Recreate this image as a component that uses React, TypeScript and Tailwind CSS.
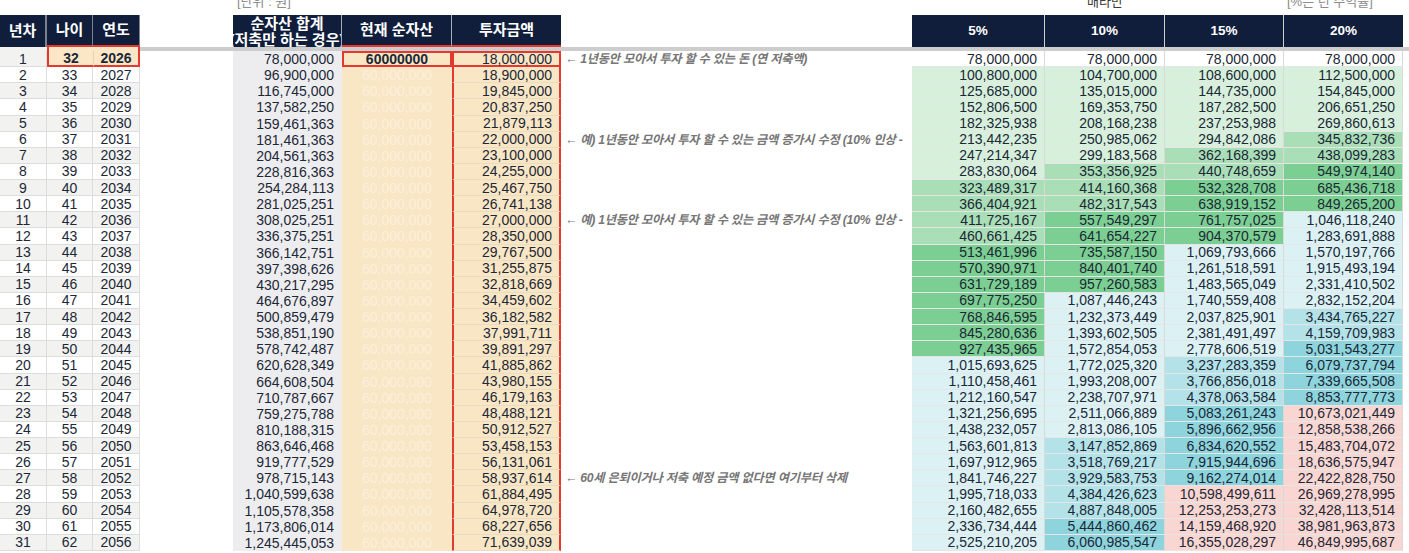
import React from "react";

type Row = [string, string, string, string, string, string, string, string, string];

const DATA: Row[] = [
  ["1", "32", "2026", "78,000,000", "18,000,000", "78,000,000", "78,000,000", "78,000,000", "78,000,000"],
  ["2", "33", "2027", "96,900,000", "18,900,000", "100,800,000", "104,700,000", "108,600,000", "112,500,000"],
  ["3", "34", "2028", "116,745,000", "19,845,000", "125,685,000", "135,015,000", "144,735,000", "154,845,000"],
  ["4", "35", "2029", "137,582,250", "20,837,250", "152,806,500", "169,353,750", "187,282,500", "206,651,250"],
  ["5", "36", "2030", "159,461,363", "21,879,113", "182,325,938", "208,168,238", "237,253,988", "269,860,613"],
  ["6", "37", "2031", "181,461,363", "22,000,000", "213,442,235", "250,985,062", "294,842,086", "345,832,736"],
  ["7", "38", "2032", "204,561,363", "23,100,000", "247,214,347", "299,183,568", "362,168,399", "438,099,283"],
  ["8", "39", "2033", "228,816,363", "24,255,000", "283,830,064", "353,356,925", "440,748,659", "549,974,140"],
  ["9", "40", "2034", "254,284,113", "25,467,750", "323,489,317", "414,160,368", "532,328,708", "685,436,718"],
  ["10", "41", "2035", "281,025,251", "26,741,138", "366,404,921", "482,317,543", "638,919,152", "849,265,200"],
  ["11", "42", "2036", "308,025,251", "27,000,000", "411,725,167", "557,549,297", "761,757,025", "1,046,118,240"],
  ["12", "43", "2037", "336,375,251", "28,350,000", "460,661,425", "641,654,227", "904,370,579", "1,283,691,888"],
  ["13", "44", "2038", "366,142,751", "29,767,500", "513,461,996", "735,587,150", "1,069,793,666", "1,570,197,766"],
  ["14", "45", "2039", "397,398,626", "31,255,875", "570,390,971", "840,401,740", "1,261,518,591", "1,915,493,194"],
  ["15", "46", "2040", "430,217,295", "32,818,669", "631,729,189", "957,260,583", "1,483,565,049", "2,331,410,502"],
  ["16", "47", "2041", "464,676,897", "34,459,602", "697,775,250", "1,087,446,243", "1,740,559,408", "2,832,152,204"],
  ["17", "48", "2042", "500,859,479", "36,182,582", "768,846,595", "1,232,373,449", "2,037,825,901", "3,434,765,227"],
  ["18", "49", "2043", "538,851,190", "37,991,711", "845,280,636", "1,393,602,505", "2,381,491,497", "4,159,709,983"],
  ["19", "50", "2044", "578,742,487", "39,891,297", "927,435,965", "1,572,854,053", "2,778,606,519", "5,031,543,277"],
  ["20", "51", "2045", "620,628,349", "41,885,862", "1,015,693,625", "1,772,025,320", "3,237,283,359", "6,079,737,794"],
  ["21", "52", "2046", "664,608,504", "43,980,155", "1,110,458,461", "1,993,208,007", "3,766,856,018", "7,339,665,508"],
  ["22", "53", "2047", "710,787,667", "46,179,163", "1,212,160,547", "2,238,707,971", "4,378,063,584", "8,853,777,773"],
  ["23", "54", "2048", "759,275,788", "48,488,121", "1,321,256,695", "2,511,066,889", "5,083,261,243", "10,673,021,449"],
  ["24", "55", "2049", "810,188,315", "50,912,527", "1,438,232,057", "2,813,086,105", "5,896,662,956", "12,858,538,266"],
  ["25", "56", "2050", "863,646,468", "53,458,153", "1,563,601,813", "3,147,852,869", "6,834,620,552", "15,483,704,072"],
  ["26", "57", "2051", "919,777,529", "56,131,061", "1,697,912,965", "3,518,769,217", "7,915,944,696", "18,636,575,947"],
  ["27", "58", "2052", "978,715,143", "58,937,614", "1,841,746,227", "3,929,583,753", "9,162,274,014", "22,422,828,750"],
  ["28", "59", "2053", "1,040,599,638", "61,884,495", "1,995,718,033", "4,384,426,623", "10,598,499,611", "26,969,278,995"],
  ["29", "60", "2054", "1,105,578,358", "64,978,720", "2,160,482,655", "4,887,848,005", "12,253,253,273", "32,428,113,514"],
  ["30", "61", "2055", "1,173,806,014", "68,227,656", "2,336,734,444", "5,444,860,462", "14,159,468,920", "38,981,963,873"],
  ["31", "62", "2056", "1,245,445,053", "71,639,039", "2,525,210,205", "6,060,985,547", "16,355,028,297", "46,849,995,687"],
];

const RAISE = "← 예) 1년동안 모아서 투자 할 수 있는 금액 증가시 수정 (10% 인상 -";
const NOTES: Record<number, string> = {
  0: "← 1년동안 모아서 투자 할 수 있는 돈 (연 저축액)",
  5: RAISE,
  10: RAISE,
  26: "← 60세 은퇴이거나 저축 예정 금액 없다면 여기부터 삭제",
};

function shade(s: string): string {
  const v = Number(s.replace(/,/g, ""));
  if (v < 100000000) return "bg-white";
  if (v < 300000000) return "bg-[#d6f0dc]";
  if (v < 500000000) return "bg-[#a9deb6]";
  if (v < 1000000000) return "bg-[#7ccf92]";
  if (v < 3000000000) return "bg-[#dbf1f4]";
  if (v < 5000000000) return "bg-[#b3e2e8]";
  if (v < 10000000000) return "bg-[#8dd4dd]";
  return "bg-[#f9d6d2]";
}

function DataRow({ r, i }: { r: Row; i: number }) {
  const [n, age, year, total, invest, p5, p10, p15, p20] = r;
  const first = i === 0;
  const stripe = i % 2 === 0 ? "bg-[#f2f2f0]" : "bg-white";
  const note = NOTES[i];
  const grid = [p5, p10, p15, p20];
  const widths = ["w-[133px]", "w-[120px]", "w-[119px]", "w-[119px]"];
  return (
    <div className="flex h-[16.13px] shrink-0 text-[14px] leading-[16px] text-[#1c2836]">
      <div className={`w-[47px] shrink-0 ${stripe} border-r border-b border-[#dddddd] flex items-center justify-center`}>{n}</div>
      {first ? (
        <>
          <div className="w-[46px] shrink-0 bg-[#fbe7c6] border-l-2 border-b-2 border-[#e5392f] flex items-center justify-center font-bold">
            {age}
          </div>
          <div className="w-[47px] shrink-0 bg-[#fbe7c6] border-l border-l-[#e8d2ae] border-r-2 border-b-2 border-[#e5392f] flex items-center justify-center font-bold">
            {year}
          </div>
        </>
      ) : (
        <>
          <div className={`w-[46px] shrink-0 ${stripe} border-r border-b border-[#dddddd] flex items-center justify-center`}>{age}</div>
          <div className={`w-[47px] shrink-0 ${stripe} border-r border-b border-[#dddddd] flex items-center justify-center`}>{year}</div>
        </>
      )}
      <div className="w-[93px] shrink-0 bg-white" />
      <div className="w-[109px] shrink-0 bg-[#ededf0] flex items-center justify-end pr-[8px]">{total}</div>
      {first ? (
        <div className="w-[110px] shrink-0 bg-[#f9e6c5] border-2 border-[#e5392f] flex items-center justify-center font-bold">
          60000000
        </div>
      ) : (
        <div className="w-[110px] shrink-0 bg-[#f9e6c5] flex items-center justify-center text-[#fcf0dc]">60,000,000</div>
      )}
      {first ? (
        <div className="w-[109px] shrink-0 bg-[#f9e6c5] border-2 border-[#e5392f] flex items-center justify-end pr-[7px]">
          {invest}
        </div>
      ) : (
        <div className="w-[109px] shrink-0 bg-[#f9e6c5] border-x-2 border-x-[#e5392f] border-b border-b-[#eadcc4] flex items-center justify-end pr-[7px]">
          {invest}
        </div>
      )}
      <div className="w-[351px] shrink-0 bg-white overflow-hidden whitespace-nowrap pl-[4px] flex items-center">
        {note && <span className="italic font-bold text-[12.2px] text-[#767676] tracking-[-0.2px]">{note}</span>}
      </div>
      {grid.map((v, k) => (
        <div
          key={k}
          className={`${widths[k]} shrink-0 ${shade(v)} border-r border-b border-r-[#d9d9d9] border-b-[#e6e6e6] flex items-center justify-end pr-[7px]`}
        >
          {v}
        </div>
      ))}
      <div className="w-[6px] shrink-0 bg-white" />
    </div>
  );
}

export default function App() {
  return (
    <div className="w-[1409px] h-[553px] overflow-hidden bg-white flex flex-col font-['Liberation_Sans','Noto_Sans_CJK_KR',sans-serif]">
      {/* clipped top labels */}
      <div className="flex h-[15px] shrink-0 overflow-hidden text-[13px] leading-[16px]">
        <div className="w-[233px] shrink-0" />
        <div className="w-[679px] shrink-0 pl-[4px]">
          <div className="-mt-[6px] text-[#8c8c8c] whitespace-nowrap">[단위 : 원]</div>
        </div>
        <div className="w-[133px] shrink-0" />
        <div className="w-[120px] shrink-0 flex justify-center">
          <div className="-mt-[6px] text-[#3a3a3a] whitespace-nowrap">배타만</div>
        </div>
        <div className="w-[119px] shrink-0" />
        <div className="w-[125px] shrink-0 pl-[3px]">
          <div className="-mt-[6px] text-[#8c8c8c] whitespace-nowrap">[%는 년 수익률]</div>
        </div>
      </div>

      {/* header */}
      <div className="flex h-[32px] shrink-0 text-white font-bold text-[15px] leading-[16px]">
        <div className="w-[47px] shrink-0 bg-[#101e3b] border-r-2 border-[#7c818c] flex items-center justify-center">년차</div>
        <div className="w-[46px] shrink-0 bg-[#101e3b] border-r border-r-[#7c818c] border-b-2 border-b-[#e5392f] flex items-center justify-center">나이</div>
        <div className="w-[47px] shrink-0 bg-[#101e3b] border-r border-r-[#7c818c] border-b-2 border-b-[#e5392f] flex items-center justify-center">연도</div>
        <div className="w-[93px] shrink-0 bg-white" />
        <div className="w-[109px] shrink-0 bg-[#101e3b] border-r border-[#a9adb5] overflow-hidden flex flex-col items-center justify-center pt-[1px]">
          <div className="whitespace-nowrap">순자산 합계</div>
          <div className="whitespace-nowrap">(저축만 하는 경우)</div>
        </div>
        <div className="w-[110px] shrink-0 bg-[#101e3b] border-r border-r-[#a9adb5] border-b-2 border-b-[#e5392f] flex items-center justify-center">현재 순자산</div>
        <div className="w-[109px] shrink-0 bg-[#101e3b] border-b-2 border-b-[#e5392f] flex items-center justify-center">투자금액</div>
        <div className="w-[351px] shrink-0 bg-white" />
        <div className="w-[133px] shrink-0 bg-[#101e3b] border-r border-[#cfcfcf] flex items-center justify-center text-[13.5px]">5%</div>
        <div className="w-[120px] shrink-0 bg-[#101e3b] border-r border-[#cfcfcf] flex items-center justify-center text-[13.5px]">10%</div>
        <div className="w-[119px] shrink-0 bg-[#101e3b] border-r border-[#cfcfcf] flex items-center justify-center text-[13.5px]">15%</div>
        <div className="w-[119px] shrink-0 bg-[#101e3b] flex items-center justify-center text-[13.5px]">20%</div>
        <div className="w-[6px] shrink-0 bg-white" />
      </div>

      {/* frozen pane divider */}
      <div className="flex h-[4px] shrink-0">
        <div className="w-[47px] shrink-0 bg-[#f2f2f0]" />
        <div className="w-[46px] shrink-0 bg-[#fbe7c6] border-l-2 border-[#e5392f]" />
        <div className="w-[47px] shrink-0 bg-[#fbe7c6] border-r-2 border-[#e5392f]" />
        <div className="flex-1 bg-[#cdcdcd]" />
      </div>

      {DATA.map((r, i) => (
        <DataRow key={i} r={r} i={i} />
      ))}
    </div>
  );
}
